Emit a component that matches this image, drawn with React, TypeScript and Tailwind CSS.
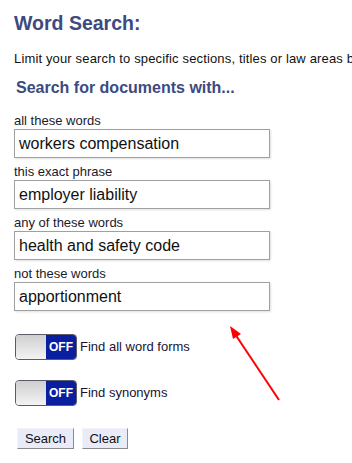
const fields = [
  { label: "all these words", value: "workers compensation" },
  { label: "this exact phrase", value: "employer liability" },
  { label: "any of these words", value: "health and safety code" },
  { label: "not these words", value: "apportionment" },
];

function OffToggle({ label }: { label: string }) {
  return (
    <div className="flex items-center">
      <div className="flex h-[26px] w-[62px] overflow-hidden rounded-[4px] border border-[#5a5a6a]">
        <div className="w-[30px] bg-gradient-to-b from-[#cfcfcf] to-[#f3f3f3]" />
        <div className="flex flex-1 items-center justify-center bg-[#0a1ea0] text-[12px] font-bold text-white">
          OFF
        </div>
      </div>
      <span className="ml-[3px] text-[13px] text-[#1a1230]">{label}</span>
    </div>
  );
}

export default function App() {
  return (
    <div className="relative h-[463px] w-[352px] overflow-hidden bg-white pl-[14px] font-['Liberation_Sans',Arial,sans-serif]">
      <h1 className="mt-[11px] whitespace-nowrap text-[19.5px] font-bold leading-[24px] text-[#3d4a80]">
        Word Search:
      </h1>
      <p className="mt-[16px] whitespace-nowrap text-[13px] leading-[15px] tracking-[0.15px] text-[#111]">
        Limit your search to specific sections, titles or law areas by
      </p>
      <h2 className="ml-[2px] mt-[13px] whitespace-nowrap text-[16px] font-bold leading-[18px] text-[#3d4a80]">
        Search for documents with...
      </h2>

      <div className="mt-[16px] flex flex-col gap-[6px]">
        {fields.map((field) => (
          <div key={field.label} className="flex flex-col">
            <label className="text-[13px] leading-[15px] text-[#1a1a2a]">
              {field.label}
            </label>
            <div className="mt-[1px] flex h-[29px] w-[256px] items-center border border-[#a0a0a0] bg-white pl-[4px] text-[16px] text-[#111] shadow-[1px_1px_2px_rgba(0,0,0,0.12)]">
              {field.value}
            </div>
          </div>
        ))}
      </div>

      <div className="ml-[1px] mt-[23px] flex flex-col gap-[20px]">
        <OffToggle label="Find all word forms" />
        <OffToggle label="Find synonyms" />
      </div>

      <div className="ml-[3px] mt-[22px] flex gap-[8px]">
        <button className="h-[21px] w-[57px] border border-[#f4f4f8] border-b-[#8a8a8a] border-r-[#8a8a8a] bg-[#e9ecf8] text-[13px] text-[#111]">
          Search
        </button>
        <button className="h-[21px] w-[46px] border border-[#f4f4f8] border-b-[#8a8a8a] border-r-[#8a8a8a] bg-[#e9ecf8] text-[13px] text-[#111]">
          Clear
        </button>
      </div>

      <svg
        className="absolute left-0 top-0"
        width="352"
        height="463"
        viewBox="0 0 352 463"
      >
        <line x1="279" y1="400" x2="235" y2="334" stroke="#ff0000" strokeWidth="2" />
        <polygon points="230,326 241,334 233,339" fill="#ff0000" />
      </svg>
    </div>
  );
}
